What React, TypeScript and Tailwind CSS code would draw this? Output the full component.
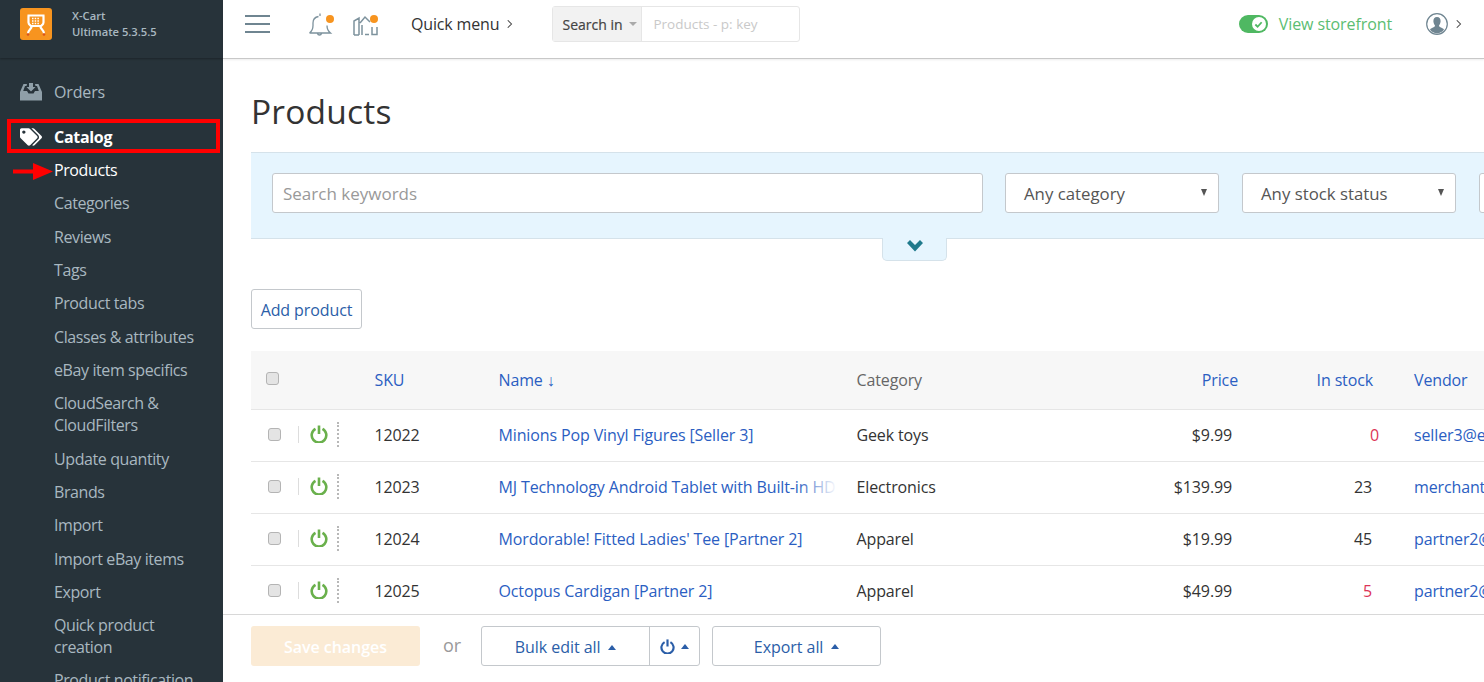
import React from "react";
import { FaTags } from "react-icons/fa";

const font = { fontFamily: '"Open Sans", "Liberation Sans", sans-serif' };

const menu: { t: string; on?: boolean }[] = [
  { t: "Products", on: true },
  { t: "Categories" },
  { t: "Reviews" },
  { t: "Tags" },
  { t: "Product tabs" },
  { t: "Classes & attributes" },
  { t: "eBay item specifics" },
  { t: "CloudSearch & CloudFilters" },
  { t: "Update quantity" },
  { t: "Brands" },
  { t: "Import" },
  { t: "Import eBay items" },
  { t: "Export" },
  { t: "Quick product creation" },
  { t: "Product notification" },
];

const rows = [
  { sku: "12022", name: "Minions Pop Vinyl Figures [Seller 3]", cat: "Geek toys", price: "$9.99", stock: "0", low: true, extra: true, vendor: "seller3@example.com" },
  { sku: "12023", name: "MJ Technology Android Tablet with Built-in HD Camera", cat: "Electronics", price: "$139.99", stock: "23", vendor: "merchant@example.com", fade: true },
  { sku: "12024", name: "Mordorable! Fitted Ladies' Tee [Partner 2]", cat: "Apparel", price: "$19.99", stock: "45", vendor: "partner2@example.com" },
  { sku: "12025", name: "Octopus Cardigan [Partner 2]", cat: "Apparel", price: "$49.99", stock: "5", low: true, vendor: "partner2@example.com" },
  { sku: "12026", name: "Plush Toy [Partner 2]", cat: "Geek toys", price: "$24.99", stock: "30", vendor: "partner2@example.com" },
];

function Power({ className }: { className?: string }) {
  return (
    <svg viewBox="0 0 18 18" className={className} fill="none" stroke="currentColor" strokeWidth="2.6">
      <path d="M5.500 3.800a7.300 7.300 0 1 0 7 0" />
      <path d="M9 0.500v8.500" />
    </svg>
  );
}

function Check() {
  return <span className="block w-[13px] h-[13px] rounded-[3px] border border-[#b4b4b4] bg-[#e4e4e4]" />;
}

function Caret() {
  return <span className="inline-block w-0 h-0 border-x-[4px] border-x-transparent border-b-[5px] border-b-[#2b5ea8]" />;
}

function Select({ label }: { label: string }) {
  return (
    <div className="shrink-0 w-[214px] h-10 pt-[1px] rounded-[3px] border border-[#c4c8cc] bg-white flex items-center justify-between pl-[18px] pr-[11px] text-[16.800px] text-[#555]">
      <span>{label}</span>
      <span className="w-0 h-0 border-x-[3.5px] border-x-transparent border-t-[7px] border-t-[#555] mb-[2px]" />
    </div>
  );
}

export default function App() {
  return (
    <div className="relative flex h-screen w-full overflow-hidden bg-white" style={font}>
      <aside className="w-[223px] shrink-0 bg-[#27333a] overflow-hidden">
        <div className="h-[58px] flex items-start pt-2 pl-5 bg-[#27333a] shadow-[0_1px_2px_rgba(0,0,0,0.3)]">
          <div className="w-8 h-8 rounded-[3px] bg-[#f7941f] flex items-center justify-center shrink-0">
            <svg viewBox="0 0 32 32" className="w-8 h-8" fill="none" stroke="#fff">
              <path d="M7.500 7.500h17M8.500 7.500v7c0 2.500 3 3 3 4.500 0 1.500-3.500 3-3.500 6.500M23.500 7.500v7c0 2.500-3 3-3 4.500 0 1.500 3.500 3 3.500 6.500M11 18h10" strokeWidth="2.200" />
              <path d="M12 10.500h8M12 13h8M12 15.500h8" strokeWidth="1.500" strokeDasharray="1.500 1.200" />
              <circle cx="8" cy="26.500" r="1.300" fill="#d9531e" stroke="none" />
              <circle cx="24" cy="26.500" r="1.300" fill="#d9531e" stroke="none" />
            </svg>
          </div>
          <div className="ml-5 text-[11.200px] leading-[16px] font-semibold text-[#a9b8c0]">
            <div>X-Cart</div>
            <div>Ultimate 5.3.5.5</div>
          </div>
        </div>
        <div className="flex items-center h-[34px] mt-[17px] pl-5 text-[16px] tracking-[-0.15px] text-[#a9b8c0]">
          <svg viewBox="0 0 22 18" className="w-[22px] h-[18px] mr-3 shrink-0" fill="#8f9fa8">
            <path d="M3.500 1H7l-.5 2H5L3.200 8H7l1.500 2.500h5L15 8h3.800L17 3h-1.500L15 1h3.500L22 9v8.500H0V9z" />
            <path d="M9 0h4v4h2.500L11 8.500 6.500 4H9z" />
          </svg>
          Orders
        </div>
        <div className="flex items-center h-[34px] mt-[11px] pl-5 text-[16px] font-bold tracking-[-0.3px] text-white">
          <FaTags className="w-[22px] h-[20px] mr-3 shrink-0" />
          Catalog
        </div>
        <ul className="text-[16px] leading-[22px] text-[#a9b8c0] -mt-[0.6px]">
          {menu.map((m) => (
            <li key={m.t} className={"pl-[54px] pr-6 py-[5.667px] tracking-[-0.4px] " + (m.on ? "text-white" : "")}>
              {m.t}
            </li>
          ))}
        </ul>
      </aside>

      <div className="flex-1 min-w-0 flex flex-col">
        <header className="h-[59px] shrink-0 flex items-center border-b border-[#c8c8c8] text-[#333] shadow-[0_1px_2px_rgba(0,0,0,0.08)] z-10 pb-[10px]">
          <div className="ml-[22px] w-[25px] flex flex-col gap-[6px]">
            <span className="h-[2px] bg-[#6f8591]" />
            <span className="h-[2px] bg-[#6f8591]" />
            <span className="h-[2px] bg-[#6f8591]" />
          </div>
          <svg viewBox="0 0 26 26" className="ml-[38px] w-[26px] h-[26px] shrink-0" fill="none" stroke="#7d929d" strokeWidth="1.300">
            <path d="M1.500 22c2.500-2 3.500-4 3.500-7.500V12c0-3.500 2.500-6 5.500-6.500M12 2.500v2.500M19 14.500c0 3.500 1 5.500 3.500 7.500h-21M9.500 22.500c.5 2 3.500 2 4 0" />
            <circle cx="22" cy="8" r="4" fill="#f7941f" stroke="none" />
          </svg>
          <svg viewBox="0 0 26 26" className="ml-[19px] w-[26px] h-[26px] shrink-0" fill="none" stroke="#7d929d" strokeWidth="1.500">
            <path d="M1 24V10l5-3v17M1 24h5M7 12l5-6 5 5M12 23.500h4M19 16v7.500h5V16M9 24V14" />
            <circle cx="21" cy="8" r="4" fill="#f7941f" stroke="none" />
          </svg>
          <div className="ml-[32px] text-[16px] tracking-[-0.15px] flex items-center">
            Quick menu
            <svg viewBox="0 0 8 12" className="ml-2 w-[6px] h-[10px]" fill="none" stroke="#444" strokeWidth="1.400"><path d="M1 1l5 5-5 5" /></svg>
          </div>
          <div className="ml-[39px] w-[248px] h-9 flex rounded-[3px] border border-[#e6e6e6] text-[14px]">
            <div className="w-[89px] bg-[#f2f2f2] flex items-center pl-[9px] text-[#444] border-r border-[#e6e6e6]">
              <span className="[-webkit-text-stroke:0.2px_#444]">Search in</span>
              <span className="ml-[6px] w-0 h-0 border-x-[4px] border-x-transparent border-t-[4px] border-t-[#aaa]" />
            </div>
            <div className="flex-1 flex items-center pl-[11px] text-[13.500px] text-[#c9c9c9]">Products - p: key</div>
          </div>
          <div className="ml-auto flex items-center">
            <div className="w-[29px] h-[18px] rounded-full bg-[#4fb862] flex items-center justify-end pr-[1px]">
              <span className="w-[14px] h-[14px] rounded-full bg-white flex items-center justify-center mr-[1px]">
                <svg viewBox="0 0 10 10" className="w-[9px] h-[9px]" fill="none" stroke="#4fb862" strokeWidth="2"><path d="M1.500 5l2.500 2.500 4.500-5" /></svg>
              </span>
            </div>
            <span className="ml-[11px] text-[16px] tracking-[-0.1px] text-[#5bbd72]">View storefront</span>
            <svg viewBox="0 0 22 22" className="ml-[34px] w-[22px] h-[22px]">
              <circle cx="11" cy="11" r="10.300" fill="#fff" stroke="#6f8591" strokeWidth="1.200" />
              <path d="M11 4c2.500 0 3.800 2 3.600 4.500-.2 2-1 3.200-1.600 4 .2 1.300 1 1.700 2.500 2.300 1.200.5 2 1 2.500 2A10 10 0 0 1 11 20.500 10 10 0 0 1 4 16.800c.5-1 1.300-1.500 2.500-2 1.500-.6 2.300-1 2.500-2.300-.6-.8-1.400-2-1.600-4C7.200 6 8.500 4 11 4z" fill="#6f8591" />
            </svg>
            <svg viewBox="0 0 8 12" className="ml-2 mr-[22px] w-[6px] h-[10px]" fill="none" stroke="#444" strokeWidth="1.400"><path d="M1 1l5 5-5 5" /></svg>
          </div>
        </header>

        <main className="flex-1 min-h-0 overflow-hidden pl-7">
          <h1 className="mt-[28px] text-[33.500px] leading-[48px] text-[#333] tracking-[0.2px]">Products</h1>

          <div className="relative mt-[17px] w-[1300px] h-[87px] bg-[#e6f5fe] border-y border-[#d5e2ea] flex items-start gap-[23px] pl-[21px] pt-5">
            <div className="shrink-0 w-[711px] -mr-[1px] h-10 pt-[1px] rounded-[3px] border border-[#c4c8cc] bg-white flex items-center pl-[10px] text-[17px] text-[#999]">
              Search keywords
            </div>
            <Select label="Any category" />
            <Select label="Any stock status" />
            <div className="shrink-0 w-[214px] h-10 rounded-[3px] border border-[#c4c8cc] bg-white" />
            <div className="absolute left-[631px] top-[85px] w-[65px] h-[23px] bg-[#e6f5fe] border border-t-0 border-[#d5e2ea] rounded-b-[5px] flex justify-center pt-[2px]">
              <svg viewBox="0 0 16 12" className="w-4 h-3" fill="#1f7a8c"><path d="M0 3l3-3 5 5 5-5 3 3-8 8.500z" /></svg>
            </div>
          </div>

          <button className="mt-[50px] block w-[111px] h-10 pt-[1px] rounded-[3px] border border-[#c4c8cc] text-[16px] text-[#2b5ea8] tracking-[-0.1px]">Add product</button>

          <table className="mt-[22px] table-fixed w-[1300px] border-collapse text-[16px] tracking-[-0.13px] text-[#333]">
            <colgroup>
              <col className="w-[123.500px]" />
              <col className="w-[124px]" />
              <col className="w-[358px]" />
              <col className="w-[270.500px]" />
              <col className="w-[111px]" />
              <col className="w-[135px]" />
              <col />
            </colgroup>
            <thead>
              <tr className="h-[58px] bg-[#f7f7f7] border-b border-[#e6e6e6] text-[#2b5ec2]">
                <th className="font-normal text-left pl-[15px]"><span className="block -mt-[2px]"><Check /></span></th>
                <th className="font-normal text-left">SKU</th>
                <th className="font-normal text-left">Name ↓</th>
                <th className="font-normal text-left text-[#666]">Category</th>
                <th className="font-normal text-right">Price</th>
                <th className="font-normal text-right">In stock</th>
                <th className="font-normal text-left pl-[41px]">Vendor</th>
              </tr>
            </thead>
            <tbody>
              {rows.map((r) => (
                <tr key={r.sku} className="h-[52px] border-b border-[#e6e6e6]">
                  <td className="pl-[17px]">
                    <div className="flex items-center -mt-[2px]">
                      <Check />
                      <span className="ml-[17px] w-px h-[17px] bg-[#ddd]" />
                      <Power className="ml-[11px] w-[18px] h-[18px] text-[#6ab04c]" />
                      <span className="ml-[9px] h-[25px] border-l-2 border-dotted border-[#b8b8b8]" />
                    </div>
                  </td>
                  <td>{r.sku}</td>
                  <td className="pr-[20px]">
                    <div className="relative whitespace-nowrap overflow-hidden text-[#2b5ec2]">
                      {r.name}
                      {r.fade && <span className="absolute right-0 top-0 bottom-0 w-10 bg-gradient-to-r from-transparent to-white" />}
                    </div>
                  </td>
                  <td>{r.cat}</td>
                  <td className="text-right pr-[6px]">{r.price}</td>
                  <td className={"text-right " + (r.low ? "text-[#dc3558]" : "")}>
                    <span className={r.extra ? "relative left-[6px]" : "relative -left-[1px]"}>{r.stock}</span>
                  </td>
                  <td className="pl-[41px] text-[#2b5ec2] whitespace-nowrap">{r.vendor}</td>
                </tr>
              ))}
            </tbody>
          </table>
        </main>

        <footer className="h-[68px] shrink-0 bg-white border-t border-[#d8d8d8] z-10 flex items-start pt-[11px] pl-7 text-[16px] tracking-[-0.05px] text-[#2b5ea8]">
          <button className="w-[169px] h-10 pt-[1px] rounded-[3px] bg-[#fbebd5] text-white font-semibold">Save changes</button>
          <span className="ml-[23px] mt-[6px] text-[18px] text-[#9a9a9a]">or</span>
          <div className="ml-[20px] w-[219px] h-10 pt-[1px] flex rounded-[3px] border border-[#c4c8cc]">
            <div className="w-[168px] -mt-[1px] flex items-center justify-center gap-2 border-r border-[#c4c8cc] pt-[2px]">Bulk edit all <Caret /></div>
            <div className="flex-1 flex items-center justify-center gap-[6px]"><Power className="w-[15px] h-[15px]" /><Caret /></div>
          </div>
          <div className="ml-3 w-[169px] h-10 pt-[1px] flex items-center justify-center gap-2 rounded-[3px] border border-[#c4c8cc]">Export all <Caret /></div>
        </footer>
      </div>

      {/* annotation overlays */}
      <div className="absolute left-[7px] top-[119px] w-[213px] h-[34px] border-4 border-[#ff0000]" />
      <svg viewBox="0 0 40 17" className="absolute left-[13px] top-[163px] w-10 h-[17px]" fill="#ff0000">
        <path d="M0 6.500h20V0l20 8.500-20 8.500v-6.500H0z" />
      </svg>
    </div>
  );
}
